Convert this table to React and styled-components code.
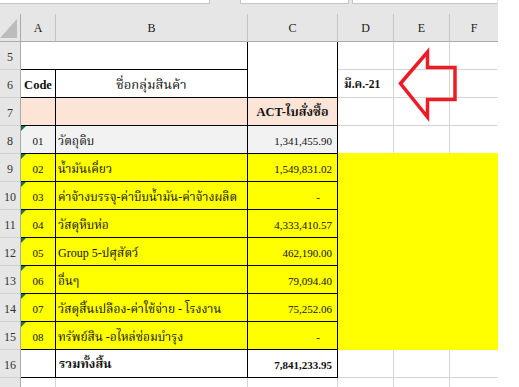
import React from "react";
import styled, { createGlobalStyle } from "styled-components";

const GRID = "#d4d4d4";
const BLACK = "#000";
const YELLOW = "#ffff00";
const HEAD_BG = "#e6e6e6";
const SERIF = `"Liberation Serif", "Norasi", "Noto Serif Thai", "Noto Sans Thai", serif`;

const Global = createGlobalStyle`
  html, body { margin: 0; padding: 0; background: #fff; overflow: hidden; }
  * { box-sizing: border-box; }
`;

const Page = styled.div`
  width: 519px;
  height: 387px;
  overflow: hidden;
  background: #fff;
  font-family: ${SERIF};
`;

const Workspace = styled.div`
  position: relative;
  width: 498px;
`;

const TopStrip = styled.div`
  display: flex;
  height: 14px;
  background: ${HEAD_BG};
  align-items: flex-start;
`;

const NameBox = styled.div`
  height: 4px;
  width: ${(p) => p.$w}px;
  margin-left: ${(p) => p.$ml || 0}px;
  background: #fff;
  border-bottom: 1px solid #c6c6c6;
  border-left: ${(p) => (p.$bl ? "1px solid #c6c6c6" : "none")};
  border-right: ${(p) => (p.$br ? "1px solid #c6c6c6" : "none")};
`;

const Sheet = styled.div`
  display: grid;
  grid-template-columns: 21px 35px 192px 90px 56px 56px 48px;
  grid-auto-rows: 28px;
`;

const Corner = styled.div`
  background: ${HEAD_BG};
  border-right: 1px solid #ababab;
  border-bottom: 1px solid #ababab;
  display: flex;
  justify-content: flex-end;
  align-items: flex-end;
  padding: 0 3px 3px 0;
`;

const CornerTri = styled.div`
  width: 0;
  height: 0;
  border-left: 17px solid transparent;
  border-bottom: 19px solid #bcbcbc;
`;

const ColHead = styled.div`
  background: ${HEAD_BG};
  border-bottom: 1px solid #ababab;
  border-right: ${(p) => (p.$last ? "none" : "1px solid #c4c4c4")};
  display: flex;
  align-items: center;
  justify-content: center;
  padding-top: 2px;
  font-family: ${SERIF};
  font-size: 12px;
  color: #1a1a1a;
`;

const RowHead = styled.div`
  background: ${HEAD_BG};
  border-right: 1px solid #ababab;
  border-bottom: 1px solid #d0d0d0;
  display: flex;
  align-items: center;
  justify-content: center;
  padding-top: 3px;
  font-family: ${SERIF};
  font-size: 12px;
  color: #333;
`;

const Cell = styled.div`
  position: relative;
  grid-column: span ${(p) => p.$span || 1};
  grid-row: span ${(p) => p.$rspan || 1};
  background: ${(p) => p.$bg || "#fff"};
  border-right: 1px solid ${(p) => p.$r || GRID};
  border-bottom: 1px solid ${(p) => p.$b || GRID};
  display: flex;
  align-items: center;
  justify-content: ${(p) =>
    p.$align === "right" ? "flex-end" : p.$align === "center" ? "center" : "flex-start"};
  padding: ${(p) => `${p.$pt ?? 3}px ${p.$pr ?? 5}px 0 ${p.$pl ?? 2}px`};
  font-family: ${SERIF};
  font-size: ${(p) => p.$size || 11}px;
  font-weight: ${(p) => (p.$bold ? 700 : 400)};
  color: #111;
  white-space: nowrap;
  overflow: visible;

  ${(p) =>
    p.$flag &&
    `&::before {
      content: "";
      position: absolute;
      left: 0;
      top: 0;
      width: 0;
      height: 0;
      border-top: 5px solid #1e7145;
      border-right: 5px solid transparent;
    }`}
`;

const Arrow = styled.svg`
  position: absolute;
  left: 0;
  top: 0;
  pointer-events: none;
`;

const items = [
  { code: "01", name: "วัตถุดิบ", val: "1,341,455.90", bg: "#f2f2f2" },
  { code: "02", name: "น้ำมันเคี่ยว", val: "1,549,831.02" },
  { code: "03", name: "ค่าจ้างบรรจุ-ค่าบีบน้ำมัน-ค่าจ้างผลิต", val: "-" },
  { code: "04", name: "วัสดุหีบห่อ", val: "4,333,410.57" },
  { code: "05", name: "Group 5-ปศุสัตว์", val: "462,190.00" },
  { code: "06", name: "อื่นๆ", val: "79,094.40" },
  { code: "07", name: "วัสดุสิ้นเปลือง-ค่าใช้จ่าย - โรงงาน", val: "75,252.06" },
  { code: "08", name: "ทรัพย์สิน -อไหล่ซ่อมบำรุง", val: "-" },
];

const THAI = 12;

export default function App() {
  return (
    <Page>
      <Global />
      <Workspace>
        <TopStrip>
          <NameBox $w={210} $br />
          <NameBox $w={109} $ml={30} $bl $br />
          <NameBox $w={145} $ml={3} $bl />
        </TopStrip>
        <Sheet>
          <Corner>
            <CornerTri />
          </Corner>
          <ColHead>A</ColHead>
          <ColHead>B</ColHead>
          <ColHead>C</ColHead>
          <ColHead>D</ColHead>
          <ColHead>E</ColHead>
          <ColHead $last>F</ColHead>

          {/* row 5 */}
          <RowHead>5</RowHead>
          <Cell $span={2} $r={BLACK} $b={BLACK} />
          <Cell $rspan={2} $r={BLACK} $b={BLACK} />
          <Cell />
          <Cell />
          <Cell $r="transparent" />

          {/* row 6 */}
          <RowHead>6</RowHead>
          <Cell $r={BLACK} $b={BLACK} $align="center" $pl={0} $pr={0} $bold $size={12.5}>
            Code
          </Cell>
          <Cell $r={BLACK} $b={BLACK} $align="center" $pl={0} $pr={0} $size={13}>
            ชื่อกลุ่มสินค้า
          </Cell>
          <Cell $bold $size={11.5} $pl={6}>
            มี.ค.-21
          </Cell>
          <Cell />
          <Cell $r="transparent" />

          {/* row 7 */}
          <RowHead>7</RowHead>
          <Cell $bg="#fce4d6" $r={BLACK} $b={BLACK} />
          <Cell $bg="#fce4d6" $r={BLACK} $b={BLACK} />
          <Cell $bg="#fce4d6" $r={BLACK} $b={BLACK} $align="center" $pl={0} $pr={0} $bold $size={12.5}>
            ACT-ใบสั่งซื้อ
          </Cell>
          <Cell />
          <Cell />
          <Cell $r="transparent" />

          {items.map((it, i) => {
            const bg = it.bg || YELLOW;
            const isYellow = !it.bg;
            const dash = it.val === "-";
            return (
              <React.Fragment key={it.code}>
                <RowHead>{8 + i}</RowHead>
                <Cell $bg={bg} $r={BLACK} $b={BLACK} $flag $align="center" $pl={0} $pr={0}>
                  {it.code}
                </Cell>
                <Cell $bg={bg} $r={BLACK} $b={BLACK} $size={THAI}>
                  {it.name}
                </Cell>
                <Cell $bg={bg} $r={BLACK} $b={BLACK} $align="right" $pr={dash ? 17 : 5}>
                  {it.val}
                </Cell>
                <Cell $bg={isYellow ? YELLOW : "#fff"} $r={isYellow ? YELLOW : GRID} $b={isYellow || i === 0 ? YELLOW : GRID} />
                <Cell $bg={isYellow ? YELLOW : "#fff"} $r={isYellow ? YELLOW : GRID} $b={isYellow || i === 0 ? YELLOW : GRID} />
                <Cell $bg={isYellow ? YELLOW : "#fff"} $r={isYellow ? YELLOW : "transparent"} $b={isYellow || i === 0 ? YELLOW : GRID} />
              </React.Fragment>
            );
          })}

          {/* row 16 */}
          <RowHead>16</RowHead>
          <Cell $r={BLACK} $b={BLACK} />
          <Cell $r={BLACK} $b={BLACK} $bold $size={12.5} $pl={3}>
            รวมทั้งสิ้น
          </Cell>
          <Cell $r={BLACK} $b={BLACK} $align="right" $bold>
            7,841,233.95
          </Cell>
          <Cell />
          <Cell />
          <Cell $r="transparent" />

          {/* row 17 (cut by the window) */}
          <RowHead />
          <Cell />
          <Cell />
          <Cell />
          <Cell />
          <Cell />
          <Cell $r="transparent" />
        </Sheet>

        <Arrow width="498" height="387" viewBox="0 0 498 387">
          <polygon
            points="400.5,83.5 427.5,52 427.5,67.5 455,67.5 455,99.5 427.5,99.5 427.5,117 400.5,83.5"
            fill="none"
            stroke="#ed1c24"
            strokeWidth="3.5"
            strokeLinejoin="miter"
          />
        </Arrow>
      </Workspace>
    </Page>
  );
}
